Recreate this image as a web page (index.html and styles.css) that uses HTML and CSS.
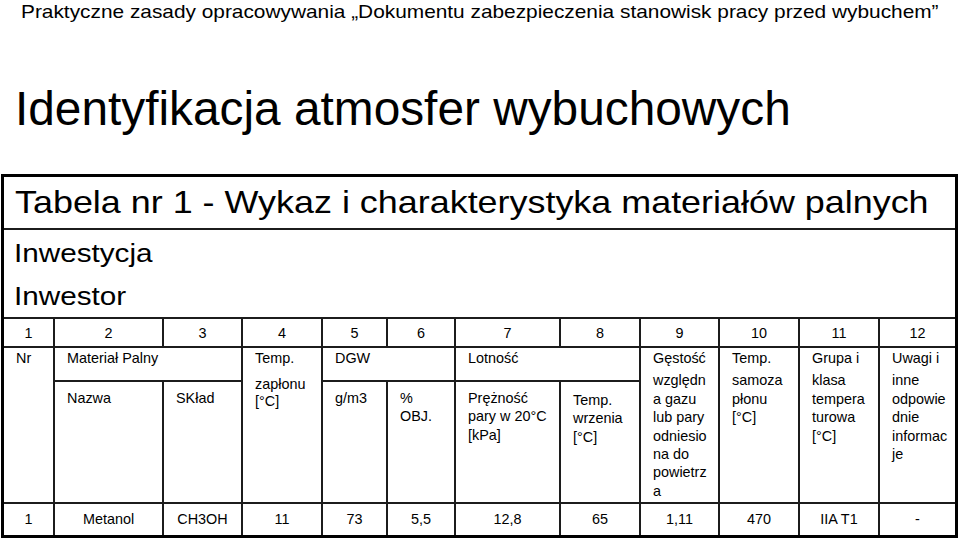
FILE: index.html
```html
<!DOCTYPE html>
<html lang="pl">
<head>
<meta charset="utf-8">
<title>Identyfikacja atmosfer wybuchowych</title>
<link rel="stylesheet" href="styles.css">
</head>
<body>
<div class="doc-header"><span class="stretch">Praktyczne zasady opracowywania „Dokumentu zabezpieczenia stanowisk pracy przed wybuchem”</span></div>
<h1 class="page-title">Identyfikacja atmosfer wybuchowych</h1>
<div class="sheet">
  <div class="cell title span-all"><span class="stretch">Tabela nr 1 - Wykaz i charakterystyka materiałów palnych</span></div>
  <div class="cell info span-all">
    <div class="info-line"><span class="stretch">Inwestycja</span></div>
    <div class="info-line"><span class="stretch">Inwestor</span></div>
  </div>

  <div class="cell num">1</div>
  <div class="cell num">2</div>
  <div class="cell num">3</div>
  <div class="cell num">4</div>
  <div class="cell num">5</div>
  <div class="cell num">6</div>
  <div class="cell num">7</div>
  <div class="cell num">8</div>
  <div class="cell num">9</div>
  <div class="cell num">10</div>
  <div class="cell num">11</div>
  <div class="cell num">12</div>

  <div class="cell hd rows2">Nr</div>
  <div class="cell hd cols2">Materiał Palny</div>
  <div class="cell hd rows2 stack flash"><p>Temp.</p><p>zapłonu<br>[°C]</p></div>
  <div class="cell hd cols2">DGW</div>
  <div class="cell hd cols2">Lotność</div>
  <div class="cell hd rows2 stack"><p>Gęstość</p><p>względn<br>a gazu<br>lub pary<br>odniesio<br>na do<br>powietrz<br>a</p></div>
  <div class="cell hd rows2 stack"><p>Temp.</p><p>samoza<br>płonu<br>[°C]</p></div>
  <div class="cell hd rows2 stack"><p>Grupa i</p><p>klasa<br>tempera<br>turowa<br>[°C]</p></div>
  <div class="cell hd rows2 stack"><p>Uwagi i</p><p>inne<br>odpowie<br>dnie<br>informac<br>je</p></div>

  <div class="cell sub">Nazwa</div>
  <div class="cell sub">SKład</div>
  <div class="cell sub">g/m3</div>
  <div class="cell sub">%<br>OBJ.</div>
  <div class="cell sub">Prężność<br>pary w 20°C<br>[kPa]</div>
  <div class="cell sub boil">Temp.<br>wrzenia<br>[°C]</div>

  <div class="cell data">1</div>
  <div class="cell data">Metanol</div>
  <div class="cell data">CH3OH</div>
  <div class="cell data">11</div>
  <div class="cell data">73</div>
  <div class="cell data">5,5</div>
  <div class="cell data">12,8</div>
  <div class="cell data">65</div>
  <div class="cell data">1,11</div>
  <div class="cell data">470</div>
  <div class="cell data">IIA T1</div>
  <div class="cell data">-</div>
</div>
</body>
</html>
```
FILE: styles.css
```css
html, body {
  margin: 0;
  padding: 0;
  background: #fff;
}

body {
  font-family: "Liberation Sans", Arial, sans-serif;
  color: #000;
  width: 960px;
  height: 539px;
  overflow: hidden;
}

.stretch {
  display: inline-block;
  white-space: nowrap;
  transform-origin: 0 50%;
}

.doc-header {
  height: 24px;
  line-height: 24px;
  font-size: 18.6px;
  padding-left: 21.3px;
}

.doc-header .stretch {
  transform: scaleX(1.121);
}

.page-title {
  margin: 54.5px 0 0 0;
  padding-left: 15px;
  font-size: 47.8px;
  line-height: 60px;
  height: 60px;
  font-weight: normal;
  white-space: nowrap;
}

.sheet {
  box-sizing: border-box;
  margin: 35.5px 0 0 1px;
  width: 957px;
  height: 364px;
  border: 3px solid #000;
  background: #1c1c1c;
  display: grid;
  grid-template-columns: 49px 107px 77px 78px 63px 66px 103px 78px 77px 78px 78px 75px;
  grid-template-rows: 51px 87px 27px 32px 120px 31px;
  gap: 2px;
}

.cell {
  background: #fff;
  font-size: 14.4px;
  overflow: hidden;
  white-space: nowrap;
}

.span-all {
  grid-column: 1 / -1;
}

.title {
  font-size: 32px;
  line-height: 51px;
  padding-left: 11px;
}

.title .stretch {
  transform: scaleX(1.122);
}

.info {
  padding: 1px 0 0 10px;
  font-size: 26.5px;
}

.info-line {
  line-height: 44px;
  height: 43px;
}

.info .stretch {
  transform: scaleX(1.12);
}

.num {
  text-align: center;
  line-height: 25px;
  padding-top: 2px;
}

.hd {
  line-height: 18.4px;
  padding: 1px 0 0 12px;
}

.rows2 {
  grid-row: span 2;
}

.cols2 {
  grid-column: span 2;
}

.stack p {
  margin: 0;
}

.stack p:first-child {
  margin-bottom: 4px;
}

.flash p:first-child {
  margin-bottom: 9px;
}

.flash p + p {
  line-height: 17px;
}

.sub {
  line-height: 18.4px;
  padding: 7px 0 0 12px;
}

.sub.boil {
  padding-top: 9px;
}

.data {
  text-align: center;
  line-height: 31px;
}
```
